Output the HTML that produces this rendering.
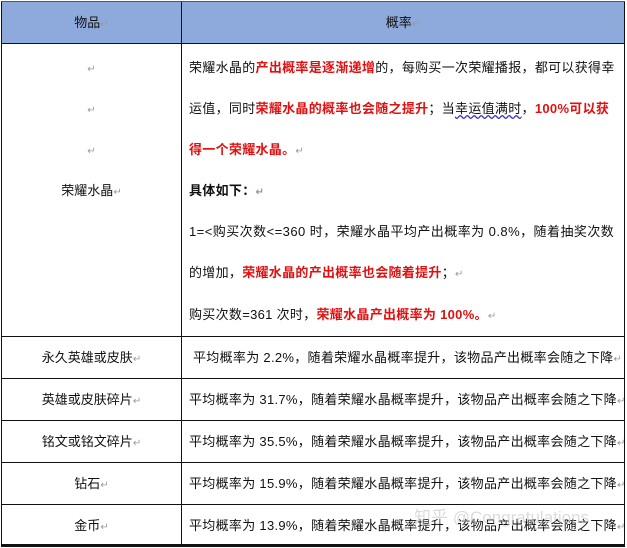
<!DOCTYPE html>
<html><head><meta charset="utf-8"><style>
body{margin:0;width:627px;height:548px;background:#fff;position:relative;overflow:hidden;font-family:"Liberation Sans","Noto Sans CJK SC",sans-serif;font-size:13px;color:#111}
.l{position:absolute;background:#111}
.t{position:absolute;white-space:nowrap;line-height:16px}
.r{color:#e01010;font-weight:bold}
.b{font-weight:bold}
.m{color:#999;font-size:10px}
.c{text-align:center}
.s{letter-spacing:0.3px}
</style></head><body>
<div style="position:absolute;left:2px;top:2px;width:622px;height:41px;background:#8eaadc"></div>
<div class="l" style="left:1px;top:1px;width:1px;height:545px"></div>
<div class="l" style="left:624px;top:1px;width:1px;height:545px"></div>
<div class="l" style="left:181px;top:1px;width:1px;height:545px"></div>
<div class="l" style="left:1px;top:1px;width:624px;height:1px;background:#555"></div>
<div class="l" style="left:1px;top:43px;width:624px;height:1px"></div>
<div class="l" style="left:1px;top:336px;width:624px;height:1px"></div>
<div class="l" style="left:1px;top:378px;width:624px;height:1px"></div>
<div class="l" style="left:1px;top:420px;width:624px;height:1px"></div>
<div class="l" style="left:1px;top:462px;width:624px;height:1px"></div>
<div class="l" style="left:1px;top:504px;width:624px;height:1px"></div>
<div class="l" style="left:1px;top:544px;width:624px;height:3px"></div>

<div class="t c" style="left:2px;width:179px;top:15px">物品<span class="m">↵</span></div>
<div class="t c" style="left:182px;width:442px;top:15px">概率<span class="m">↵</span></div>

<div class="t c" style="left:2px;width:179px;top:60px"><span class="m">↵</span></div>
<div class="t c" style="left:2px;width:179px;top:101px"><span class="m">↵</span></div>
<div class="t c" style="left:2px;width:179px;top:142px"><span class="m">↵</span></div>
<div class="t c" style="left:2px;width:179px;top:183px">荣耀水晶<span class="m">↵</span></div>

<div class="t s" style="left:189px;top:60px">荣耀水晶的<span class="r">产出概率是逐渐递增</span>的，每购买一次荣耀播报，都可以获得幸</div>
<div class="t s" style="left:189px;top:101px">运值，同时<span class="r">荣耀水晶的概率也会随之提升</span>；当<span style="text-decoration:underline wavy #33c">幸运值满时</span>，<span class="r">100%可以获</span></div>
<div class="t s" style="left:189px;top:142px"><span class="r">得一个荣耀水晶。</span><span class="m">↵</span></div>
<div class="t b s" style="left:189px;top:183px">具体如下：<span class="m">↵</span></div>
<div class="t" style="left:189px;top:224px;letter-spacing:0.45px">1=&lt;购买次数&lt;=360 时，荣耀水晶平均产出概率为 0.8%，随着抽奖次数</div>
<div class="t s" style="left:189px;top:265px">的增加，<span class="r">荣耀水晶的产出概率也会随着提升</span>；<span class="m">↵</span></div>
<div class="t s" style="left:189px;top:307px">购买次数=361 次时，<span class="r">荣耀水晶产出概率为 100%。</span><span class="m">↵</span></div>

<div class="t c" style="left:2px;width:179px;top:350px">永久英雄或皮肤<span class="m">↵</span></div>
<div class="t s" style="left:193px;top:350px">平均概率为 2.2%，随着荣耀水晶概率提升，该物品产出概率会随之下降<span class="m">↵</span></div>
<div class="t c" style="left:2px;width:179px;top:392px">英雄或皮肤碎片<span class="m">↵</span></div>
<div class="t s" style="left:189px;top:392px">平均概率为 31.7%，随着荣耀水晶概率提升，该物品产出概率会随之下降<span class="m">↵</span></div>
<div class="t c" style="left:2px;width:179px;top:434px">铭文或铭文碎片<span class="m">↵</span></div>
<div class="t s" style="left:189px;top:434px">平均概率为 35.5%，随着荣耀水晶概率提升，该物品产出概率会随之下降<span class="m">↵</span></div>
<div class="t c" style="left:2px;width:179px;top:476px">钻石<span class="m">↵</span></div>
<div class="t s" style="left:189px;top:476px">平均概率为 15.9%，随着荣耀水晶概率提升，该物品产出概率会随之下降<span class="m">↵</span></div>
<div class="t c" style="left:2px;width:179px;top:518px">金币<span class="m">↵</span></div>
<div class="t s" style="left:189px;top:518px">平均概率为 13.9%，随着荣耀水晶概率提升，该物品产出概率会随之下降<span class="m">↵</span></div>
<div class="t" style="left:414px;top:510px;font-size:17px;color:rgba(190,190,190,0.55)">知乎 @Congratulations</div>
</body></html>
